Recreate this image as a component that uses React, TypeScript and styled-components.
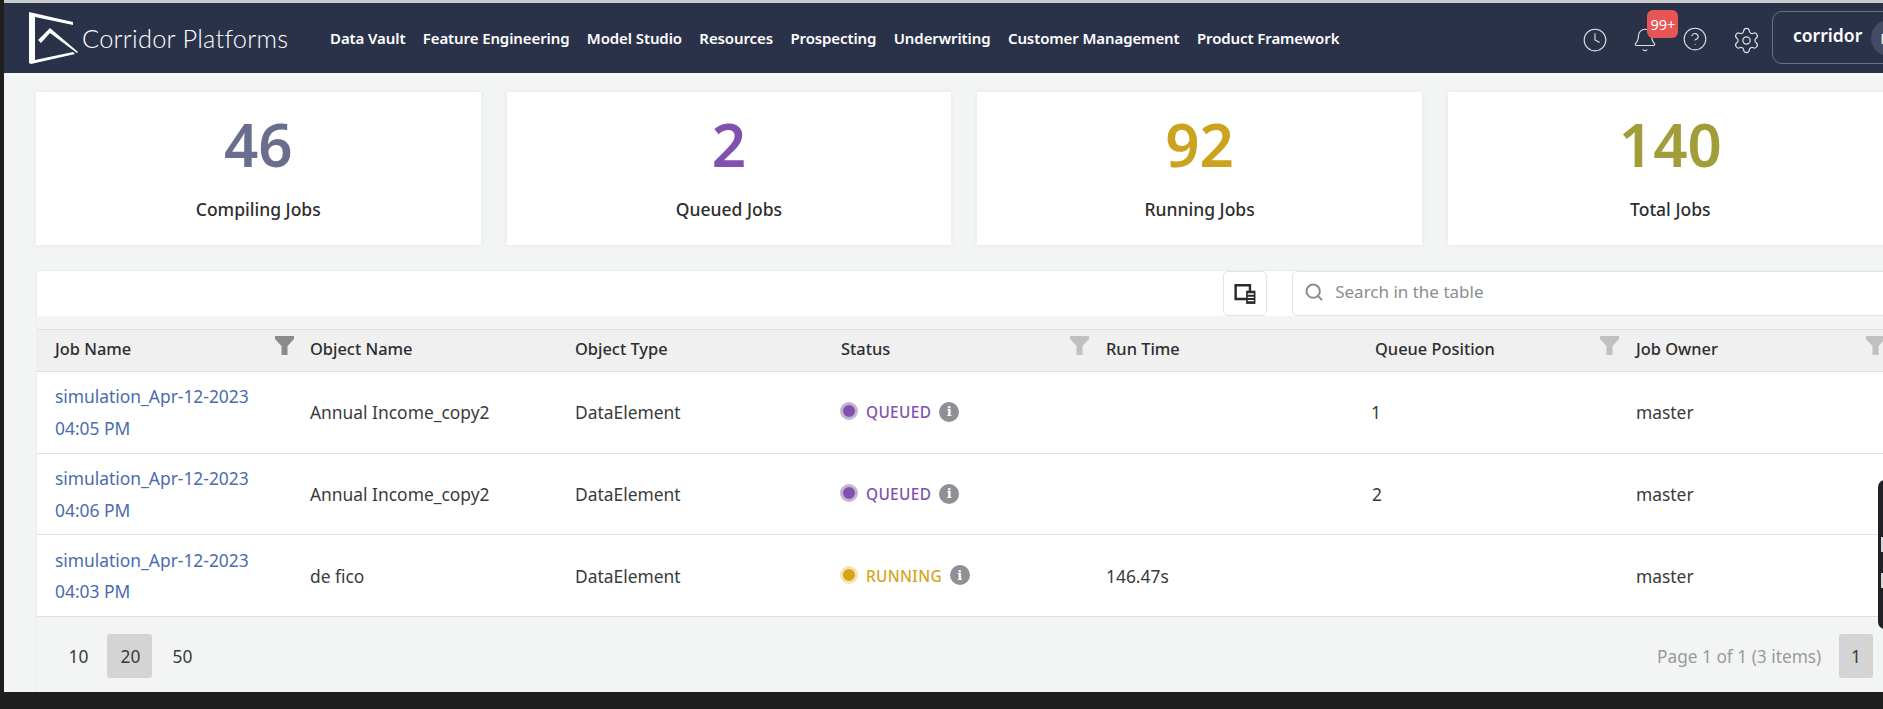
import React from "react";
import styled, { createGlobalStyle } from "styled-components";
import { Bell, CircleHelp, Clock, Search, Settings } from "lucide-react";

const Global = createGlobalStyle`
  html, body { margin: 0; padding: 0; background: #1e1e1e; overflow: hidden; }
  * { box-sizing: border-box; }
`;

const Screen = styled.div`
  width: 1883px; height: 709px; overflow: hidden; position: relative;
  display: flex; flex-direction: column;
  background: #1e1e1e;
  font-family: "Noto Sans", "Open Sans", sans-serif;
  color: #333;
`;
const TopEdge = styled.div`height: 3px; background: #c9cbcd; margin-left: 4px; flex: none;`;
const Window = styled.div`margin-left: 4px; width: 1960px; height: 689px; flex: none; display: flex; flex-direction: column; background: #f3f5f5;`;
const Header = styled.header`
  height: 70px; flex: none; background: #2a3249; display: flex; align-items: center;
  padding-left: 24px; position: relative;
`;
const Brand = styled.div`display: flex; align-items: center; width: 302px; flex: none;`;
const BrandName = styled.span`
  font-family: Lato, sans-serif; font-weight: 300; font-size: 25.4px; color: #fff;
  margin-left: -2px; letter-spacing: 0.25px; white-space: nowrap;
`;
const Nav = styled.nav`display: flex; gap: 17.4px; margin-top: -1px;`;
const NavLink = styled.span`font-size: 15px; font-weight: 600; color: #fff; white-space: nowrap; letter-spacing: -0.1px;`;
const Tools = styled.div`
  position: absolute; left: 1566px; top: 0; height: 70px; width: 400px;
  display: flex; align-items: center; color: #dfe1e6;
`;
const ToolIcon = styled.span<{ $w: number; $x?: number; $y?: number }>`
  width: ${p => p.$w}px; display: flex; justify-content: center; position: relative;
  transform: translate(${p => p.$x ?? 0}px, ${p => p.$y ?? 0}px);
`;
const Badge = styled.span`
  position: absolute; left: 27px; top: -17px; width: 31px; height: 28px; border-radius: 6px;
  background: #e85555; color: #fff; font-size: 14.5px; display: flex; align-items: center; justify-content: center;
`;
const UserBox = styled.div`
  margin-left: 2px; width: 200px; height: 53px; border: 1px solid #6b6f78; border-radius: 10px;
  display: flex; align-items: center; padding-left: 20px; gap: 9px; margin-top: -1px;
`;
const UserName = styled.span`font-size: 17.6px; font-weight: 600; color: #fff; margin-top: -6px;`;
const Avatar = styled.span`
  width: 36px; height: 36px; border-radius: 50%; background: #454b63; color: #fff; font-size: 15px;
  display: flex; align-items: center; padding-left: 9px;
`;
const Content = styled.main`flex: 1; padding: 19px 0 0 32px; display: flex; flex-direction: column;`;
const Stats = styled.section`display: flex; gap: 26.2px;`;
const StatCard = styled.div`
  width: 444.5px; height: 153px; background: #fff; box-shadow: 0 0 6px rgba(0,0,0,.06);
  display: flex; flex-direction: column; align-items: center;
`;
const StatNumber = styled.div<{ $c: string }>`
  font-size: 60px; line-height: 82px; margin-top: 11px; font-weight: 600; color: ${p => p.$c};
`;
const StatLabel = styled.div`font-size: 17.5px; font-weight: 500; color: #2e2e2e; line-height: 24px; margin-top: 12px;`;
const TablePanel = styled.section`margin-top: 25px; flex: 1; display: flex; flex-direction: column; border-left: 1px solid #eceeee;`;
const Toolbar = styled.div`
  height: 46px; background: #fff; display: flex; align-items: center; flex: none; padding-left: 1186px;
  border-top: 1px solid #eaecec;
`;
const ColumnButton = styled.div`
  width: 46px; height: 45px; border: 1px solid #e2e4e4; border-radius: 5px; background: #fff;
  display: flex; align-items: center; justify-content: center;
`;
const SearchBox = styled.div`
  margin-left: 25px; width: 700px; height: 45px; border: 1px solid #e2e4e4; border-radius: 5px; background: #fff;
  display: flex; align-items: center; padding: 0 0 4px 11px; gap: 11px; color: #8a8d91;
  font-size: 17px;
`;
const Spacer = styled.div`height: 13px; flex: none;`;
const Row = styled.div<{ $head?: boolean }>`
  display: grid; grid-template-columns: 255px 265px 266px 265px 269px 261px 240px;
  align-items: center; height: ${p => p.$head ? "43px" : "81.7px"}; flex: none;
  background: ${p => p.$head ? "#f0f0f0" : "#fff"};
  border-bottom: 1px solid #dfe0e0;
  ${p => p.$head ? "border-top: 1px solid #dfe0e0; font-weight: 500;" : ""}
  font-size: 17.4px; color: #3a3a3a;
`;
const HeadCell = styled.div`position: relative; padding: 0 0 5px 18px; height: 100%; display: flex; align-items: center; font-size: 16.4px; color: #2d2d2d;`;
const Funnel = styled.svg<{ $dark?: boolean; $x: number }>`
  position: absolute; top: 6px; left: ${p => p.$x}px; color: ${p => p.$dark ? "#8a8a8a" : "#c0c0c0"};
`;
const Cell = styled.div<{ $pad?: number }>`padding-left: ${p => p.$pad ?? 18}px;`;
const JobStack = styled.div`padding-top: 1px;`;
const JobLink = styled.a`display: block; color: #4a6cae; line-height: 31.4px; padding-left: 18px; font-size: 17.4px;`;
const StatusWrap = styled.div<{ $c: string }>`
  padding-left: 17px; display: flex; align-items: center; color: ${p => p.$c};
  font-size: 15.4px; font-weight: 500; letter-spacing: 0.35px; margin-top: -1px;
`;
const StatusText = styled.span`margin-top: 2px;`;
const Dot = styled.span<{ $c: string; $ring: string }>`
  width: 18px; height: 18px; border-radius: 50%; background: ${p => p.$c}; border: 3px solid ${p => p.$ring};
  margin-right: 8px; flex: none; margin-top: -1px;
`;
const Info = styled.span`
  width: 20px; height: 20px; border-radius: 50%; background: #8f9094; color: #fff; font-family: "DejaVu Serif", serif;
  font-size: 13px; font-weight: 700; display: flex; align-items: center; justify-content: center; margin-left: 8px;
`;
const Pager = styled.footer`
  flex: 1; display: flex; align-items: center; background: #f3f5f5; padding-left: 18px; position: relative;
`;
const PageSize = styled.span<{ $on?: boolean }>`
  width: 45px; height: 44px; border-radius: 3px; display: flex; align-items: center; justify-content: center;
  font-size: 17.4px; color: #3a3a3a; margin-right: 7px; margin-top: 3px; padding-left: 2px;
  background: ${p => p.$on ? "#d4d4d4" : "transparent"};
`;
const PageInfo = styled.span`margin-left: 1446px; font-size: 17.3px; color: #9a9a9a; white-space: nowrap; margin-top: 3px; width: 182px;`;
const PageNum = styled.span`
  width: 34px; height: 44px; background: #d4d4d4; border-radius: 3px; font-size: 17.4px; margin-top: 3px;
  display: flex; align-items: center; justify-content: center; color: #3a3a3a;
`;
const SideHandle = styled.div`
  position: absolute; left: 1878px; top: 480px; width: 20px; height: 149px; background: #1f2126;
  border-radius: 7px 0 0 7px;
  &::before, &::after { content: ""; position: absolute; left: 3px; width: 4px; height: 15px; background: #d8d8d8; }
  &::before { top: 57px; }
  &::after { top: 93px; }
`;

const FunnelIcon = ({ x, dark }: { x: number; dark?: boolean }) => (
  <Funnel $x={x} $dark={dark} width="19" height="19" viewBox="0 0 19 19" aria-hidden>
    <path d="M0 0h19v3L12.5 10v9h-6v-9L0 3z" fill="currentColor" />
  </Funnel>
);

const LogoMark = () => (
  <svg width="56" height="56" viewBox="0 0 56 56" aria-hidden>
    <path d="M1 2 L45 12 L45 15 L7 7 L7 50 L45 42 L47 44 L3 54 L1 53z" fill="#fff" />
    <path d="M10 30 L22 18 L50 42 L49 43 L22 23 L13 33z" fill="#fff" />
  </svg>
);

const ColumnsIcon = () => (
  <svg width="22" height="22" viewBox="0 0 20 20" aria-hidden>
    <path d="M1.5 2h13v12.5h-13z" fill="none" stroke="#2a2a2a" strokeWidth="2.2" />
    <path d="M11 7h8.5v12H11z" fill="#2a2a2a" />
    <path d="M12.5 10h5.5M12.5 13h5.5M12.5 16h5.5" stroke="#fff" strokeWidth="1.2" />
  </svg>
);

const navItems = ["Data Vault", "Feature Engineering", "Model Studio", "Resources", "Prospecting", "Underwriting", "Customer Management", "Product Framework"];
const stats = [
  { n: "46", label: "Compiling Jobs", c: "#6a6e8e" },
  { n: "2", label: "Queued Jobs", c: "#8151ad" },
  { n: "92", label: "Running Jobs", c: "#cba31f" },
  { n: "140", label: "Total Jobs", c: "#a39c3a" },
];
const heads = [
  { t: "Job Name", f: 238, dark: true },
  { t: "Object Name" }, { t: "Object Type" },
  { t: "Status", f: 247 }, { t: "Run Time" },
  { t: "Queue Position", f: 243 }, { t: "Job Owner", f: 248 },
];
const rows = [
  { time: "04:05 PM", obj: "Annual Income_copy2", status: "QUEUED", run: "", q: "1", qp: 14 },
  { time: "04:06 PM", obj: "Annual Income_copy2", status: "QUEUED", run: "", q: "2", qp: 15 },
  { time: "04:03 PM", obj: "de fico", status: "RUNNING", run: "146.47s", q: "", qp: 18 },
];

export default function App() {
  return (
    <Screen>
      <Global />
      <TopEdge />
      <Window>
        <Header>
          <Brand>
            <LogoMark />
            <BrandName>Corridor Platforms</BrandName>
          </Brand>
          <Nav>{navItems.map(n => <NavLink key={n}>{n}</NavLink>)}</Nav>
          <Tools>
            <ToolIcon $w={50} $y={2}><Clock size={26} strokeWidth={1} /></ToolIcon>
            <ToolIcon $w={50} $x={1} $y={2}>
              <Bell size={26} strokeWidth={1} />
              <Badge>99+</Badge>
            </ToolIcon>
            <ToolIcon $w={51} $x={1} $y={1}><CircleHelp size={26} strokeWidth={1} /></ToolIcon>
            <ToolIcon $w={51} $x={2} $y={2}><Settings size={29} strokeWidth={1} /></ToolIcon>
            <UserBox>
              <UserName>corridor</UserName>
              <Avatar>M</Avatar>
            </UserBox>
          </Tools>
        </Header>
        <Content>
          <Stats>
            {stats.map(s => (
              <StatCard key={s.label}>
                <StatNumber $c={s.c}>{s.n}</StatNumber>
                <StatLabel>{s.label}</StatLabel>
              </StatCard>
            ))}
          </Stats>
          <TablePanel>
            <Toolbar>
              <ColumnButton><ColumnsIcon /></ColumnButton>
              <SearchBox><Search size={20} strokeWidth={2.4} />Search in the table</SearchBox>
            </Toolbar>
            <Spacer />
            <Row $head>
              {heads.map(h => (
                <HeadCell key={h.t}>
                  {h.t}
                  {h.f !== undefined && <FunnelIcon x={h.f} dark={h.dark} />}
                </HeadCell>
              ))}
            </Row>
            {rows.map(r => (
              <Row key={r.time}>
                <JobStack>
                  <JobLink>simulation_Apr-12-2023</JobLink>
                  <JobLink>{r.time}</JobLink>
                </JobStack>
                <Cell>{r.obj}</Cell>
                <Cell>DataElement</Cell>
                <StatusWrap $c={r.status === "QUEUED" ? "#8151ad" : "#d6a41c"}>
                  <Dot $c={r.status === "QUEUED" ? "#8151ad" : "#d6a41c"} $ring={r.status === "QUEUED" ? "#c3b5d0" : "#f8e2ad"} />
                  <StatusText>{r.status}</StatusText>
                  <Info>i</Info>
                </StatusWrap>
                <Cell>{r.run}</Cell>
                <Cell $pad={r.qp}>{r.q}</Cell>
                <Cell>master</Cell>
              </Row>
            ))}
            <Pager>
              <PageSize>10</PageSize>
              <PageSize $on>20</PageSize>
              <PageSize>50</PageSize>
              <PageInfo>Page 1 of 1 (3 items)</PageInfo>
              <PageNum>1</PageNum>
            </Pager>
          </TablePanel>
        </Content>
      </Window>
      <SideHandle />
    </Screen>
  );
}
